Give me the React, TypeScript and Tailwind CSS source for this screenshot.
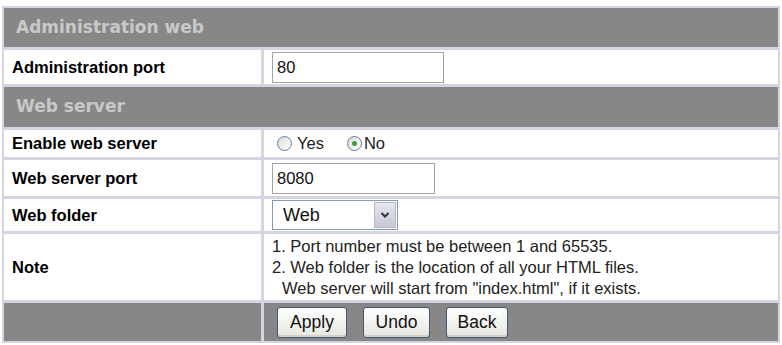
import React from "react";

const sans = { fontFamily: '"Liberation Sans", Arial, sans-serif' };

function Header({ title, h }: { title: string; h: string }) {
  return (
    <div
      className={`${h} bg-[#878787] flex items-center pl-[12px] text-[17px] font-bold text-[#c9c9c9]`}
      style={{ fontFamily: '"DejaVu Sans", Verdana, sans-serif' }}
    >
      {title}
    </div>
  );
}

function Row({
  label,
  children,
  h,
}: {
  label: string;
  children: React.ReactNode;
  h: string;
}) {
  return (
    <div className={`grid grid-cols-[257px_1fr] gap-[3px] ${h}`}>
      <div className="bg-white flex items-center pl-[8px] text-[16.5px] font-bold text-black">
        {label}
      </div>
      <div className="bg-white flex items-center pl-[8px] text-[16.5px] text-[#222]">
        {children}
      </div>
    </div>
  );
}

function TextBox({ value, w }: { value: string; w: string }) {
  return (
    <div
      className={`${w} h-[31px] border border-[#a3a3a3] bg-white flex items-center pl-[4px] text-[16.5px] text-[#111]`}
    >
      {value}
    </div>
  );
}

function Radio({ checked }: { checked?: boolean }) {
  return (
    <div className="w-[15px] h-[15px] rounded-full border border-[#5f7fa0] bg-gradient-to-br from-[#dcdcd6] to-white flex items-center justify-center">
      {checked && <div className="w-[5px] h-[5px] rounded-full bg-[#3aa03a]" />}
    </div>
  );
}

function Btn({ label, w }: { label: string; w: string }) {
  return (
    <div
      className={`${w} h-[31px] rounded-[3px] border border-[#3c5a78] bg-gradient-to-b from-white to-[#e6e6e0] flex items-center justify-center text-[17.5px] text-[#111] shadow-[inset_0_-2px_0_#d6d0c5]`}
    >
      {label}
    </div>
  );
}

export default function App() {
  return (
    <div className="w-[782px] h-[345px] bg-white pt-[6px] pl-[2px]" style={sans}>
      <div className="w-[778px] bg-[#d4d4e2] p-[2px] flex flex-col gap-[3px]">
        <Header title="Administration web" h="h-[39px]" />
        <Row label="Administration port" h="h-[34px]">
          <TextBox value="80" w="w-[172px]" />
        </Row>
        <Header title="Web server" h="h-[40px]" />
        <Row label="Enable web server" h="h-[27px]">
          <div className="flex items-center pl-[5px]">
            <Radio />
            <span className="ml-[5px]">Yes</span>
            <span className="ml-[23px]">
              <Radio checked />
            </span>
            <span className="ml-[2px]">No</span>
          </div>
        </Row>
        <Row label="Web server port" h="h-[36px]">
          <TextBox value="8080" w="w-[163px]" />
        </Row>
        <Row label="Web folder" h="h-[32px]">
          <div className="w-[126px] h-[30px] border border-[#7f9db9] bg-white flex items-stretch">
            <div className="flex-1 flex items-center pl-[10px] text-[18px] text-[#111]">Web</div>
            <div className="w-[22px] m-[1px] bg-gradient-to-b from-[#e6e6ee] to-[#c8c8d6] border border-[#b8b8c8] flex items-center justify-center">
              <svg width="10" height="8" viewBox="0 0 10 8">
                <path d="M1.5 2 L5 5.5 L8.5 2" stroke="#333" strokeWidth="2" fill="none" />
              </svg>
            </div>
          </div>
        </Row>
        <Row label="Note" h="h-[66px]">
          <div className="leading-[21px] text-[16.5px] text-[#222]">
            <div>1. Port number must be between 1 and 65535.</div>
            <div>2. Web folder is the location of all your HTML files.</div>
            <div className="pl-[10px]">Web server will start from "index.html", if it exists.</div>
          </div>
        </Row>
        <div className="grid grid-cols-[257px_1fr] gap-[3px] h-[38px]">
          <div className="bg-[#878787]" />
          <div className="bg-[#878787] flex items-center pl-[13px] gap-[16px]">
            <Btn label="Apply" w="w-[70px]" />
            <Btn label="Undo" w="w-[67px]" />
            <Btn label="Back" w="w-[62px]" />
          </div>
        </div>
      </div>
    </div>
  );
}
